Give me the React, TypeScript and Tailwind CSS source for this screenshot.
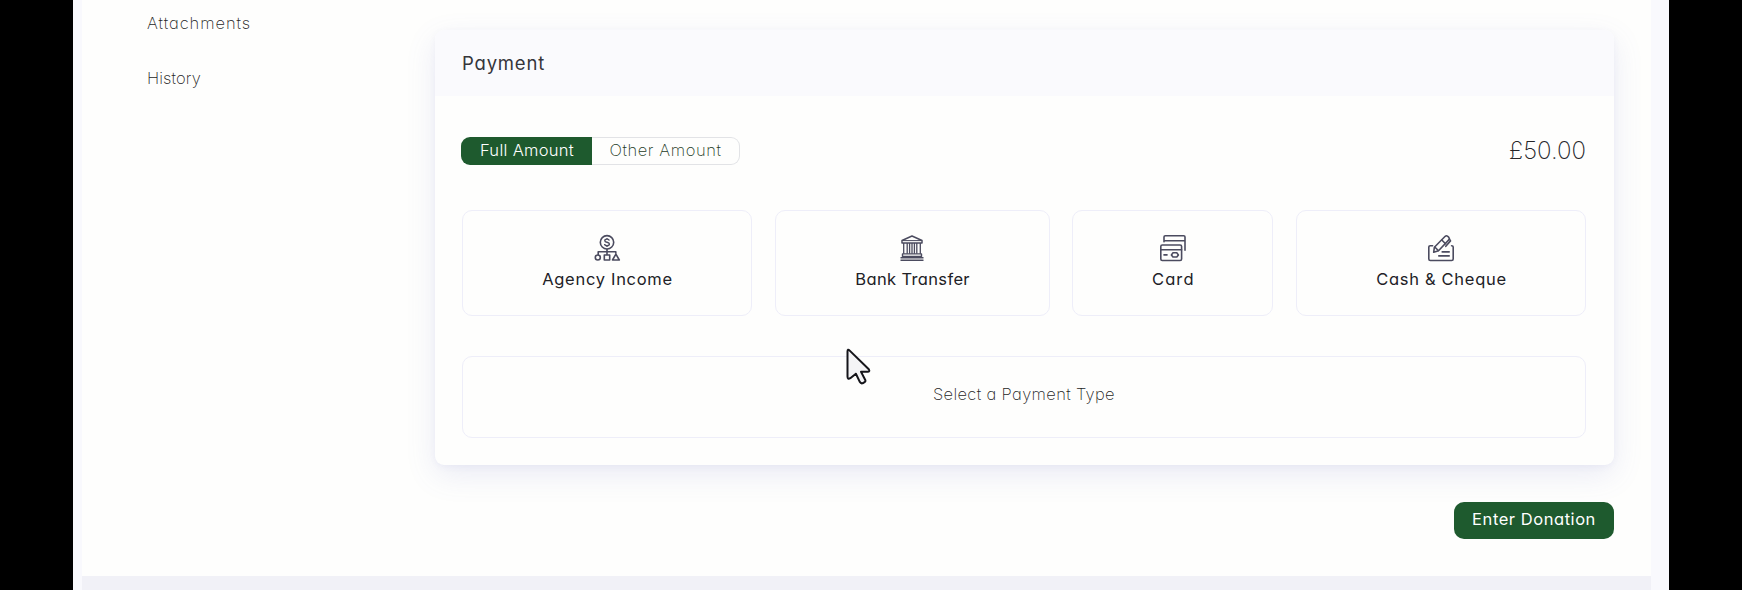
import type { ReactNode } from "react";

function AgencyIcon() {
  return (
    <svg width="28" height="28" viewBox="0 0 28 28" fill="none" stroke="currentColor" strokeWidth="1.6" strokeLinejoin="round">
      <circle cx="14" cy="8.3" r="6.7" />
      <path d="M16.3 6.6c-.2-1-1.1-1.5-2.3-1.5-1.3 0-2.2.6-2.2 1.6 0 2.2 4.6 1 4.6 3.3 0 1.1-1 1.7-2.4 1.7-1.3 0-2.3-.6-2.4-1.7M14 4v1.100M14 11.700v1.200" strokeWidth="1.400" />
      <path d="M14 15v6M5.200 21v-3.200h17.600v2" />
      <circle cx="4.800" cy="23.500" r="2.500" />
      <rect x="11.300" y="21" width="5.400" height="5" />
      <path d="M22.900 20.100l3.400 5.900h-6.800z" />
    </svg>
  );
}

function BankIcon() {
  return (
    <svg width="28" height="28" viewBox="0 0 28 28" fill="none" stroke="currentColor" strokeWidth="1.5" strokeLinejoin="round">
      <path d="M4 6.500L14 2l10 4.500v2.600H4z" />
      <path d="M4.800 6.600h18.400" strokeWidth="1" />
      <path d="M5.700 9.100v10.700M9.200 9.100v10.700M11.600 9.100v10.700M14 9.100v10.700M16.400 9.100v10.700M18.800 9.100v10.700M22.300 9.100v10.700" strokeWidth="1.300" />
      <path d="M4.500 19.900h19v2.500h-19zM2.500 23.800h23M2.500 26.300h23" strokeWidth="1.400" />
    </svg>
  );
}

function CardIcon() {
  return (
    <svg width="28" height="28" viewBox="0 0 28 28" fill="none" stroke="currentColor" strokeWidth="1.600" strokeLinecap="round" strokeLinejoin="round">
      <path d="M5 7.800V3q0-1.300 1.300-1.300h18.400Q26 1.700 26 3v13.200M5.200 6.700H26" />
      <rect x="1.800" y="11" width="20.800" height="15.500" rx="1.500" />
      <path d="M2 15.800h20.500M5 20.900h3" />
      <path d="M14 18.800h3.800l1.600 2.100-1.600 2.100H14l-1.600-2.100z" />
    </svg>
  );
}

function ChequeIcon() {
  return (
    <svg width="28" height="28" viewBox="0 0 28 28" fill="none" stroke="currentColor" strokeWidth="1.600" strokeLinecap="round" strokeLinejoin="round">
      <path d="M5.600 11.700H3.200q-1.400 0-1.400 1.400v11.800q0 1.600 1.600 1.600h21.200q1.600 0 1.600-1.600V13.100q0-1.400-1.600-1.400" />
      <path d="M6.700 18.200l.7-5L18.200 2.300q1.200-1.100 2.500 0l1.100 1.100q1.100 1.200 0 2.500L11.500 16.700z" />
      <path d="M14.800 6l3.700 3.700M8 13.200l3.300 3.300M22.500 5.200l1 1.700-4.700 5.400M15.200 17.900h7M11.800 21.900h10.400" />
    </svg>
  );
}

function Cursor() {
  return (
    <svg className="absolute left-[846px] top-[348px]" width="26" height="38" viewBox="0 0 26 38" fill="#f4f4f6" stroke="#15151a" strokeWidth="2" strokeLinejoin="round">
      <path d="M1.500 3.500Q1.500 .4 3.700 2.600L22.800 21.300Q24.300 23.500 21.500 23.800H15L19.400 32.200Q19.800 33.800 17.200 35Q15 36 13.900 34.100L9.900 25.700L4.300 30.200Q1.500 31.800 1.500 28.500Z" />
    </svg>
  );
}

function Method({ icon, children, className }: { icon: ReactNode; children: ReactNode; className: string }) {
  return (
    <button className={`flex h-[106px] shrink-0 flex-col items-center rounded-[10px] border border-[#eeeef9] pt-[23px] ${className}`}>
      <span className="text-[#4b4b5f]">{icon}</span>
      <span className="mt-[5px] pl-px text-[#212126]">{children}</span>
    </button>
  );
}

export default function App() {
  return (
    <div className="relative flex h-[590px] w-[1742px] overflow-hidden bg-black font-['Inter',sans-serif] text-[16.5px] leading-6 whitespace-nowrap [font-feature-settings:'cv11']">
      <div className="ml-[73px] flex w-[1596px] flex-col bg-[#f9f9fd] pl-[9px] pr-[18px]">
        <div className="flex h-[576px] w-full bg-[#fefefd]">
          <nav className="flex w-[353px] shrink-0 flex-col gap-[31px] pl-[65px] pt-[11px] font-extralight text-[#1f1f26]">
            <a className="tracking-[0.95px]">Attachments</a>
            <a className="tracking-[0.1px]">History</a>
          </nav>
          <main className="flex w-[1179px] shrink-0 flex-col pt-[30px]">
            <section className="h-[435px] rounded-[9px] bg-[#fefefd] shadow-[0_10px_30px_rgba(100,110,190,0.13),0_2px_6px_rgba(100,110,190,0.06)]">
              <header className="flex h-[66px] items-center rounded-t-[9px] bg-[#fafafd] pl-[27px] text-[18.5px] tracking-[0.8px] text-[#35353a]">
                Payment
              </header>
              <div className="pl-[27px] pr-7">
                <div className="mt-[41px] flex h-7 items-center justify-between">
                  <div className="-ml-px flex h-7 w-[279px] leading-6">
                    <button className="w-[131px] rounded-l-[9px] bg-[#1e5a2e] pb-[3px] pl-px text-center font-light tracking-[0.3px] text-white">Full Amount</button>
                    <button className="grow rounded-r-[9px] border border-l-0 border-[#e2e3e6] pb-[3px] text-center font-extralight tracking-[0.6px] text-[#1d3a25]">Other Amount</button>
                  </div>
                  <div className="text-2xl font-extralight text-[#242428]">£50.00</div>
                </div>
                <div className="mt-[45px] flex justify-between">
                  <Method icon={<AgencyIcon />} className="w-[290px] tracking-[0.7px]">Agency Income</Method>
                  <Method icon={<BankIcon />} className="w-[275px] tracking-[0.35px]">Bank Transfer</Method>
                  <Method icon={<CardIcon />} className="w-[201px] tracking-[1.1px]">Card</Method>
                  <Method icon={<ChequeIcon />} className="w-[290px] tracking-[0.7px]">Cash &amp; Cheque</Method>
                </div>
                <div className="mt-[40px] flex h-[82px] justify-center rounded-[10px] border border-[#eeeef9] pt-[25px] font-extralight tracking-[0.35px] text-[#1f1f26]">
                  Select a Payment Type
                </div>
              </div>
            </section>
            <button className="mt-[37px] h-[37px] w-[160px] self-end rounded-[10px] bg-[#1e5a2e] pb-[3px] text-center tracking-[0.55px] text-white">
              Enter Donation
            </button>
          </main>
        </div>
        <div className="h-[14px] bg-[#f1f1f7]" />
      </div>
      <Cursor />
    </div>
  );
}
